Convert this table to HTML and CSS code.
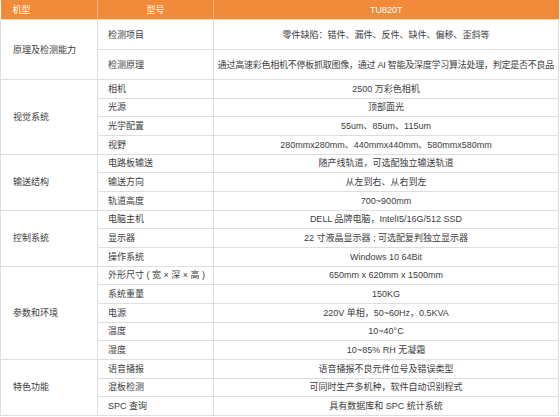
FILE: index.html
```html
<!DOCTYPE html>
<html lang="zh-CN">
<head>
<meta charset="utf-8">
<title>TU820T 规格</title>
<link rel="stylesheet" href="styles.css">
</head>
<body>
<table class="spec">
  <colgroup>
    <col class="c1">
    <col class="c2">
    <col class="c3">
  </colgroup>
  <thead>
    <tr class="head">
      <th class="h-left">机型</th>
      <th>型号</th>
      <th>TU820T</th>
    </tr>
  </thead>
  <tbody>
    <tr class="tall">
      <td class="group" rowspan="2">原理及检测能力</td>
      <td class="item">检测项目</td>
      <td class="val">零件缺陷：错件、漏件、反件、缺件、偏移、歪斜等</td>
    </tr>
    <tr class="tall">
      <td class="item">检测原理</td>
      <td class="val long">通过高速彩色相机不停板抓取图像，通过 AI 智能及深度学习算法处理，判定是否不良品</td>
    </tr>
    <tr>
      <td class="group" rowspan="4">视觉系统</td>
      <td class="item">相机</td>
      <td class="val">2500 万彩色相机</td>
    </tr>
    <tr>
      <td class="item">光源</td>
      <td class="val">顶部面光</td>
    </tr>
    <tr>
      <td class="item">光学配置</td>
      <td class="val">55um、85um、115um</td>
    </tr>
    <tr>
      <td class="item">视野</td>
      <td class="val">280mmx280mm、440mmx440mm、580mmx580mm</td>
    </tr>
    <tr>
      <td class="group" rowspan="3">输送结构</td>
      <td class="item">电路板输送</td>
      <td class="val">随产线轨道，可选配独立输送轨道</td>
    </tr>
    <tr>
      <td class="item">输送方向</td>
      <td class="val">从左到右、从右到左</td>
    </tr>
    <tr>
      <td class="item">轨道高度</td>
      <td class="val">700~900mm</td>
    </tr>
    <tr>
      <td class="group" rowspan="3">控制系统</td>
      <td class="item">电脑主机</td>
      <td class="val">DELL 品牌电脑，IntelI5/16G/512 SSD</td>
    </tr>
    <tr>
      <td class="item">显示器</td>
      <td class="val">22 寸液晶显示器 ; 可选配复判独立显示器</td>
    </tr>
    <tr>
      <td class="item">操作系统</td>
      <td class="val">Windows 10 64Bit</td>
    </tr>
    <tr>
      <td class="group" rowspan="5">参数和环境</td>
      <td class="item">外形尺寸 ( 宽 × 深 × 高 )</td>
      <td class="val">650mm x 620mm x 1500mm</td>
    </tr>
    <tr>
      <td class="item">系统重量</td>
      <td class="val">150KG</td>
    </tr>
    <tr>
      <td class="item">电源</td>
      <td class="val">220V 单相，50~60Hz，0.5KVA</td>
    </tr>
    <tr>
      <td class="item">温度</td>
      <td class="val">10~40°C</td>
    </tr>
    <tr>
      <td class="item">湿度</td>
      <td class="val">10~85% RH 无凝霜</td>
    </tr>
    <tr>
      <td class="group" rowspan="3">特色功能</td>
      <td class="item">语音播报</td>
      <td class="val">语音播报不良元件位号及错误类型</td>
    </tr>
    <tr>
      <td class="item">混板检测</td>
      <td class="val">可同时生产多机种，软件自动识别程式</td>
    </tr>
    <tr>
      <td class="item">SPC 查询</td>
      <td class="val">具有数据库和 SPC 统计系统</td>
    </tr>
  </tbody>
</table>
</body>
</html>
```

FILE: styles.css
```css
html, body {
  margin: 0;
  padding: 0;
  background: #ffffff;
}

body {
  font-family: "Liberation Sans", "Noto Sans CJK SC", sans-serif;
  font-size: 9px;
  color: #3c3c3c;
}

.spec {
  width: 558px;
  border-collapse: collapse;
  table-layout: fixed;
}

.c1 { width: 97px; }
.c2 { width: 116px; }
.c3 { width: 345px; }

.head th {
  background: #f28a3c;
  color: #ffffff;
  font-weight: normal;
  height: 19px;
  padding: 0;
  line-height: 12px;
  text-align: center;
  border-left: 1px solid rgba(255, 255, 255, 0.35);
}

.head th.h-left {
  text-align: left;
  padding-left: 12px;
  border-left: none;
}

.spec td {
  border: 1px solid #dedede;
  padding: 0;
  height: 17.67px;
  line-height: 12px;
  vertical-align: middle;
}

.spec tr.tall td {
  height: 29px;
}

.spec td.group {
  padding-left: 12px;
  text-align: left;
  border-left: 1px solid #dedede;
}

.spec td.item {
  padding-left: 10px;
  text-align: left;
  white-space: nowrap;
}

.spec td.val {
  text-align: center;
  padding: 0 2px;
  white-space: nowrap;
}

.spec td.val.long {
  padding: 0;
  letter-spacing: -0.25px;
}
```
